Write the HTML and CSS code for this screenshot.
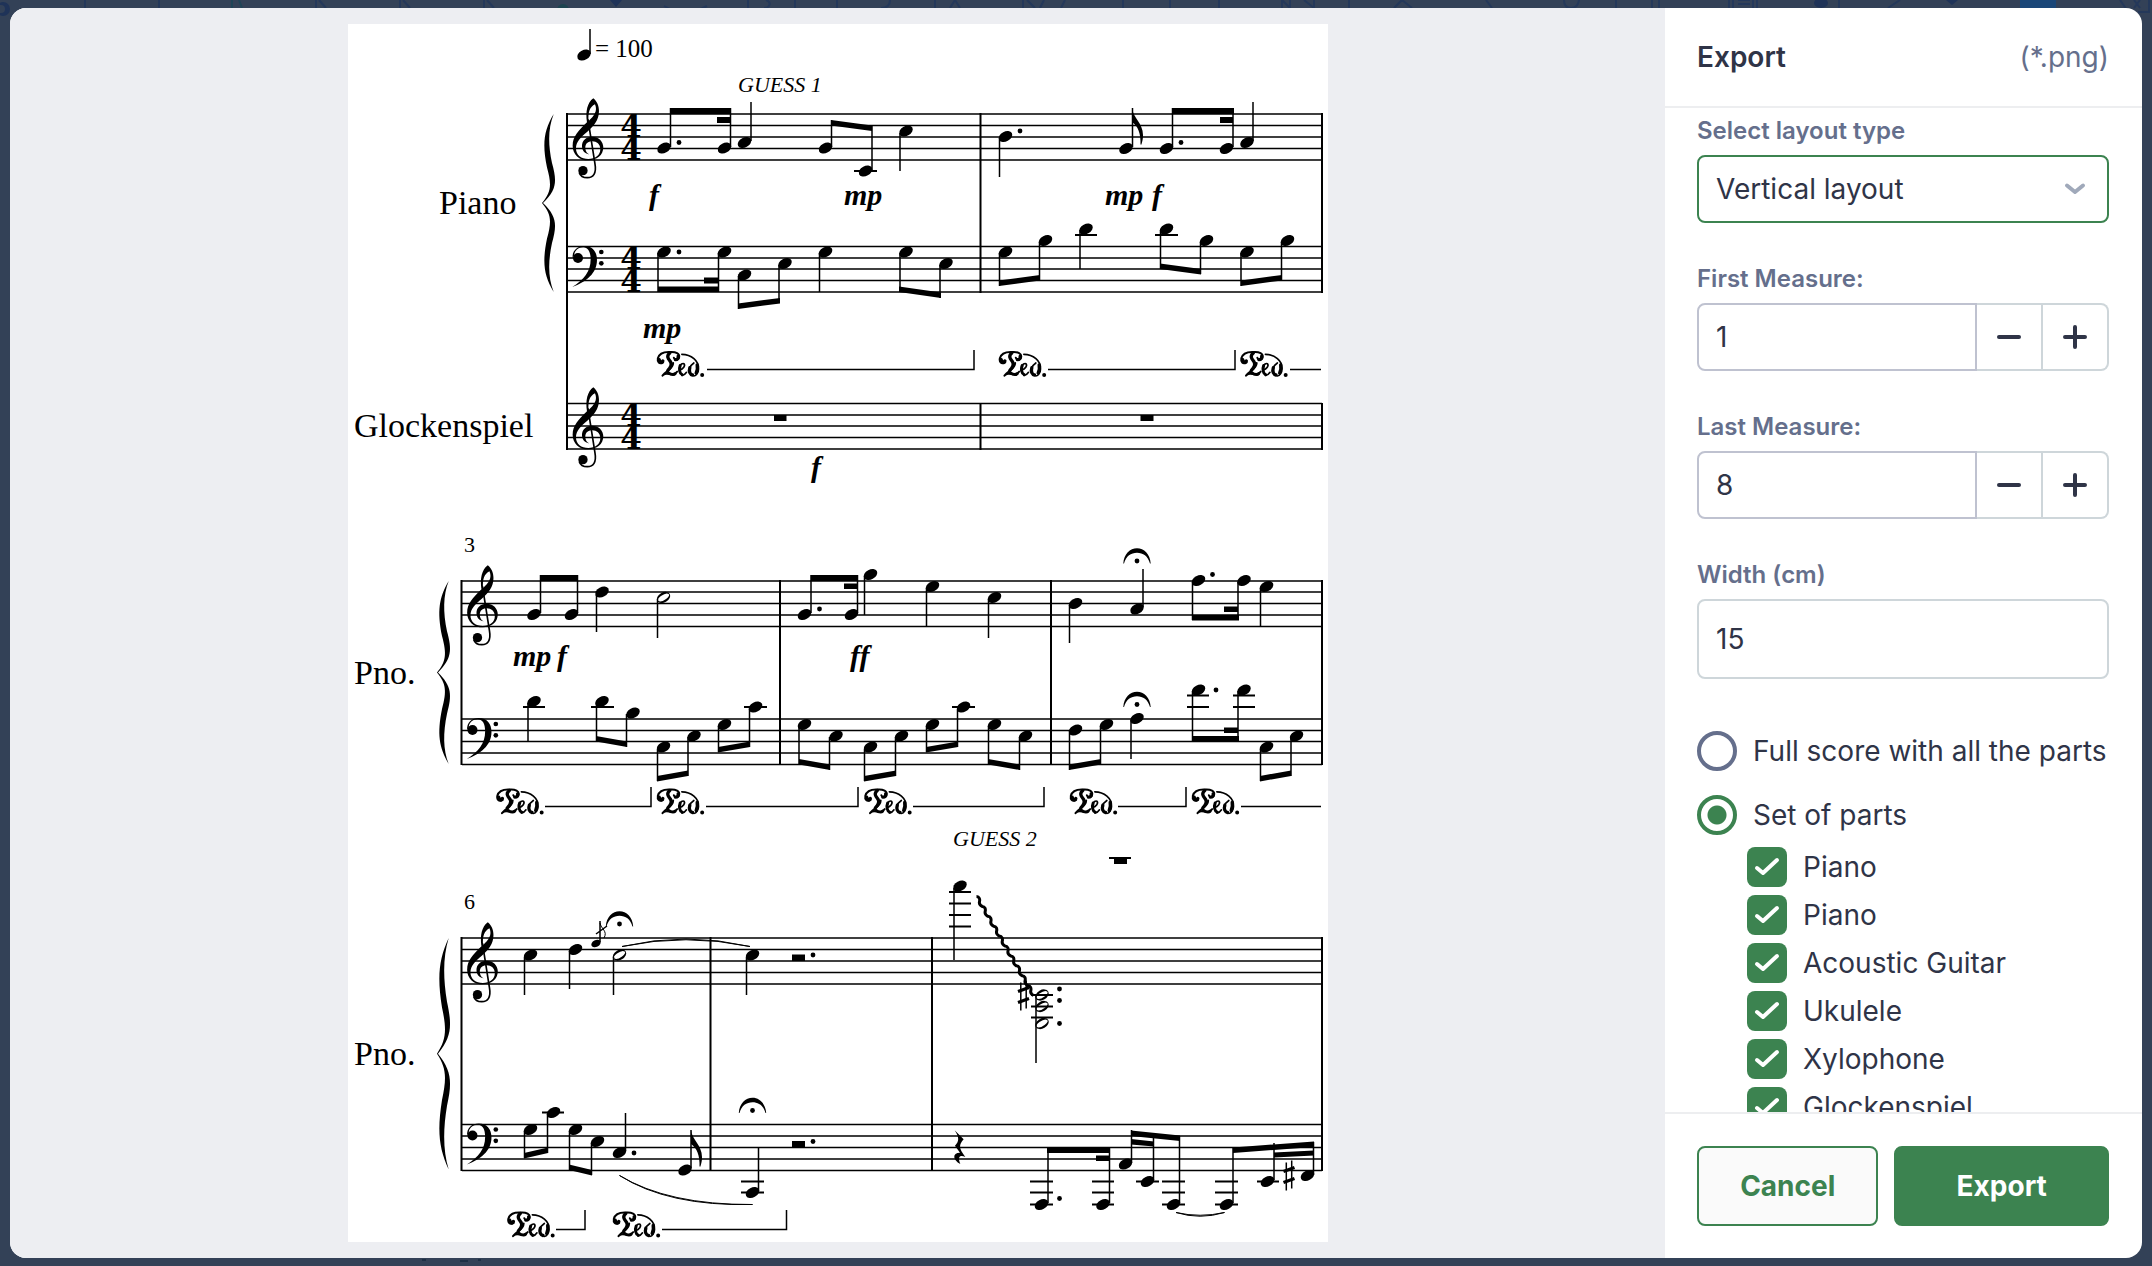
FILE: index.html
```html
<!DOCTYPE html>
<html lang="en">
<head>
<meta charset="utf-8">
<title>Export</title>
<link rel="stylesheet" href="styles.css">
</head>
<body>
<svg class="backdrop" aria-hidden="true" preserveAspectRatio="xMidYMin slice" viewBox="0 0 2152 1266">
  <g fill="none" stroke="#24385a" stroke-width="2">
    <path d="M85 0V8M159 0V8M316 0V8M400 0V8M484 0V8M319 0l7 8M403 0l7 8M487 0l7 8"/>
    <path d="M1652 0V8M1729 0V8M1733 0V8M1738 0h12M1738 4h12M1753 0V8M1757 0V8M1839 0V8M1888 8l12-8M2120 0l7 10M2134 0l6 8M2140 0l-6 8M2149 0V12H2138"/>
    <path d="M748 0V8M795 0V8M837 0V8M935 0V8M1123 0V8M1170 0V8M1219 0V8M1349 0V8M1616 0V8M1659 0V8M766 0c6 2 4 8-2 8M890 0c0 5-3 8-9 8M950 8l5-8l5 8M1023 0V8M1027 0l8 8M1040 8l4-8M1061 8l4-8M1282 0V8l0-8l8 8V0M1304 0l10 8V0M1394 8l8-8l10 8M1486 0l6 8M1564 0q0 8 7 8t8-8M664 6q21 12 43 0"/>
    <path stroke="#1f4457" d="M232 0V8M239 0l3 8"/>
    <path stroke="#1d2f45" d="M422 1260h4M460 1261h8M478 1260h3"/>
  </g>
  <circle cx="3" cy="9" r="7" fill="#1f3358"/><circle cx="1" cy="9" r="4" fill="#334157"/>
  <circle cx="563" cy="10" r="6" fill="#1d4450"/>
  <path d="M610 0h12l-6 7z" fill="#1f3358"/>
  <ellipse cx="1821" cy="3" rx="7" ry="5" fill="#1f3358"/><path d="M1946 0h12l-6 5z" fill="#1f3358"/>
  <path fill="#1a4678" d="M2020 0h36v8h-36z"/>
</svg>
<main class="modal">
  <section class="preview" aria-label="Score preview">
    <svg class="score" viewBox="348 24 980 1218" role="img" aria-label="Score">
      <defs>
        <marker id="head" markerUnits="userSpaceOnUse" markerWidth="20" markerHeight="20" refX="0" refY="0" viewBox="-10 -10 20 20"><ellipse rx="7.2" ry="4.9" transform="rotate(-28)"/></marker>
        <marker id="half" markerUnits="userSpaceOnUse" markerWidth="20" markerHeight="20" refX="0" refY="0" viewBox="-10 -10 20 20"><path fill-rule="evenodd" transform="rotate(-30)" d="M-7.2 0A7.2 5 0 1 1 7.2 0A7.2 5 0 1 1-7.2 0ZM-6.2 .6A6.2 2.6 0 1 0 6.2-.6A6.2 2.6 0 1 0-6.2 .6Z"/></marker>
        <marker id="dot" markerUnits="userSpaceOnUse" markerWidth="8" markerHeight="8" refX="0" refY="0" viewBox="-4 -4 8 8"><circle r="2.4"/></marker>
        <g id="treble"><g transform="translate(340 10) scale(.3333)">
          <path fill-rule="evenodd" d="M760 265C772 274 777 290 777 303C777 330 762 348 742 365C722 382 708 395 708 415C708 436 724 447 745 447C766 447 781 436 781 418C781 402 770 394 757 394C744 394 736 401 736 413C736 423 741 430 748 433C733 431 726 421 726 408C726 392 738 380 756 380C776 380 790 394 790 412C790 436 770 451 745 451C718 451 698 434 698 407C698 380 715 362 741 337C736 305 742 278 760 265ZM765 283C750 290 743 308 746 333C762 318 774 303 765 283Z"/>
          <path fill="none" stroke="#000" stroke-width="5" d="M744 328L765 462C770 490 760 503 742 503C730 503 721 498 718 488"/>
          <circle cx="729" cy="482" r="14"/></g></g>
        <g id="bass"><g transform="translate(340 10) scale(.3333)">
          <path d="M698 744C696 722 712 708 733 708C758 708 771 725 771 750C771 790 738 816 697 831C732 810 752 785 752 748C752 726 745 713 730 712C715 712 703 722 703 736Z"/>
          <circle cx="714" cy="744" r="15"/><circle cx="784" cy="726" r="7"/><circle cx="784" cy="760" r="7"/></g></g>
        <path id="brace" d="M11.7 0C2 18 0 33 5 60C10 80 9 88 0 100C9 112 10 120 5 140C0 167 2 182 11.7 200C6 184 6 166 10 145C15 125 15 115 1 100C15 85 15 75 10 55C6 34 6 16 11.7 0Z"/>
        <g id="fermata"><path d="M-13.7 2.5C-13-7-7-12.7 0-12.7S13-7 13.7 2.5H13C11-5 6-8.3 0-8.3S-11-5-13 2.5Z"/><circle r="2.4"/></g>
        <path id="flag" d="M0 0C1 10 11 15 11 27C11 32 10 34 9.500 36.500H8.500C9 26 6 18 0 14Z"/>
        <g id="sharp" fill="none" stroke="#000"><path stroke-width="1.500" d="M-2.700-13V15M2.700-15V13"/><path stroke-width="3.200" d="M-5.500-4L5.500-8M-5.500 7L5.500 3"/></g>
        <g id="ped" fill="none" stroke="#000"><g transform="translate(0 1) scale(.3333)" stroke-linecap="round">
          <path stroke-width="6" d="M20 34C8 42 2 32 4 22C8 6 26 2 42 3C58 2 70 8 68 18C66 28 54 28 52 20"/>
          <path stroke-width="10" d="M19 30C16 36 10 34 8 26M57 26C63 26 66 22 65 16"/>
          <path stroke-width="10" d="M40 6C28 16 36 24 42 32C48 42 40 52 34 58"/>
          <path stroke-width="6" d="M50 36C50 54 30 58 18 74M20 72C30 62 42 74 54 70L62 62"/>
          <path stroke-width="9" d="M34 64C42 70 50 74 56 68M71 44C67 54 69 68 77 71"/>
          <path stroke-width="5" d="M69 58C80 54 88 44 82 38C78 36 72 40 70 46M76 73C82 74 86 70 90 64"/>
          <path stroke-width="5" d="M76 10C104 10 128 30 126 54C126 64 120 74 112 75M112 36C106 40 100 46 98 54"/>
          <path stroke-width="10" d="M100 50C96 62 101 71 108 72M122 42C124 52 122 60 119 66"/>
          <circle cx="137" cy="72" r="3" stroke-width="6"/></g></g>
      </defs>
      <rect class="paper" x="348" y="24" width="980" height="1218"/>

      <path class="line" d="M567 114H1322M567 125.500H1322M567 137H1322M567 148.500H1322M567 160H1322M567 246.500H1322M567 258H1322M567 269H1322M567 280.500H1322M567 292H1322M567 403.500H1322M567 415H1322M567 426H1322M567 437.500H1322M567 449H1322
        M462 581H1322M462 592H1322M462 603.500H1322M462 615H1322M462 626.500H1322M462 719H1322M462 730.500H1322M462 741.500H1322M462 753H1322M462 764.500H1322
        M462 938H1322M462 949.500H1322M462 961H1322M462 972.500H1322M462 984H1322M462 1124.500H1322M462 1136H1322M462 1147.500H1322M462 1159H1322M462 1170.500H1322"/>
      <path class="bar" d="M567 113V450M980.500 113V293M980.500 403V450M1322 113V293M1322 403V450M461.500 580V765M780 580V765M1051 580V765M1322 580V765M461.500 937V1171M710.500 937V1171M932 937V1171M1322 937V1171"/>
      <use href="#brace" transform="translate(542 114) scale(1 .89)"/>
      <use href="#brace" transform="translate(437 581) scale(1 .915)"/>
      <use href="#brace" transform="translate(437 938) scale(1 1.157)"/>
      <use href="#treble"/><use href="#treble" y="289"/><use href="#treble" x="-105.500" y="467"/><use href="#treble" x="-105.500" y="824"/>
      <use href="#bass"/><use href="#bass" x="-105.500" y="472"/><use href="#bass" x="-105.500" y="877.500"/>

      <g class="meter"><text x="631" y="137">4</text><text x="631" y="160">4</text><text x="631" y="269">4</text><text x="631" y="292">4</text><text x="631" y="426">4</text><text x="631" y="449">4</text></g>
      <g class="part"><text x="439" y="214">Piano</text><text x="354" y="437">Glockenspiel</text><text x="354" y="684">Pno.</text><text x="354" y="1065">Pno.</text></g>
      <g class="number"><text x="464" y="552">3</text><text x="464" y="909">6</text></g>
      <text class="tempo" x="595" y="57">= 100</text>
      <g class="lyric"><text x="738" y="92">GUESS 1</text><text x="953" y="846">GUESS 2</text></g>
      <g class="dynamic"><text x="649" y="205">f</text><text x="844" y="205">mp</text><text x="1105" y="205">mp</text><text x="1152" y="205">f</text><text x="643" y="338">mp</text><text x="811" y="477">f</text><text x="513" y="666">mp</text><text x="557" y="666">f</text><text x="850" y="666">ff</text></g>

      <polyline class="heads" points="584,55 664,148 724.500,148 744.500,142.500 825.500,148 865.500,171 906,131 1005.500,136.500 1126,148.500 1166.500,148.500 1226.500,148.500 1247,142.500
        664,252 724.500,252 744.500,275 785,263.500 825.500,252 906,252 946,263.500 1005.500,252 1045.500,240.500 1086,229 1166.500,229 1206.500,240.500 1247,252 1287.500,240.500"/>
      <polyline class="heads" points="534,614.500 571.500,614.500 602,592 804.500,614.500 851.500,614.500 870.500,574.500 932.500,586.500 994.500,597.500 1075.500,603.500 1137,609 1198.500,580.500 1244,580.500 1266.500,586.500
        534,701.500 602,701.500 633,713 663.500,747 694,736 724.500,724.500 755.500,707 804.500,724.500 836,736 870.500,747 901.500,736 932.500,724.500 963.500,707 994.500,724.500 1025.500,736 1075.500,730 1106.500,724.500 1137,718.500 1198.500,690 1244,690 1266.500,747 1296.500,736"/>
      <polyline class="heads" points="530.500,955 575.500,949.500 752.500,955 960,886 530.500,1129.500 553.500,1112.500 575.500,1129.500 597.500,1141.500 619.500,1152.500 685,1170 752.500,1192.500 1041.500,1204.500 1103,1204.500 1125.500,1164 1147.500,1181.500 1173.500,1204.500 1226.500,1204.500 1267.500,1181.500 1307.500,1175.500"/>
      <polyline class="halves" points="663.500,597.500 619.500,955 1042,995 1042,1006.500 1042,1023.500"/>
      <polyline class="dots" points="679,142.500 679,252 1020,131 1181,142.500 819.500,609 1212.500,574.500 1216,690 813,955 1059.500,989 1059.500,1000.500 1059.500,1023.500 634,1153 813,1141.500 1059.500,1198.500"/>
      <ellipse cx="596" cy="943.500" rx="5" ry="3.400" transform="rotate(-28 596 943.500)"/>

      <path class="stem" d="M590 29V54M670.500 108V147M730.500 108V147M751 102V141M831.500 120V147M872 126V170M900 133V171M999.500 138V177M1132.500 108V147M1172.500 108V147M1233 108V147M1253 102V141
        M658 253V292M718.500 253V292M738.500 276V309M779 265V303M819.500 253V292M900 253V292M940 265V298M999.500 253V286M1039.500 242V280M1080 230V269M1160.500 230V269M1200.500 242V274M1241 253V286M1281.500 242V280
        M540.500 575V613M577.500 575V613M596.500 594V632M657.500 599V638M811 575V613M857.500 575V613M864.500 576V615M926.500 588V627M988.500 599V638M1069.500 605V643M1143 569V607M1192.500 582V620M1238 582V620M1260.500 588V627
        M528 703V741M596.500 703V741M626.500 714V747M657.500 749V781M688 737V776M718.500 726V752M749.500 709V747M799 726V764M829.500 737V770M864.500 749V781M895.500 737V776M926.500 726V752M957.500 709V747M988.500 726V764M1019.500 737V770M1069.500 731V770M1100.500 726V764M1131 720V759M1192.500 691V741M1238 691V741M1260.500 749V781M1291 737V776
        M524.500 957V995M569.500 951V989M613.500 957V995M746.500 957V995M600 921V942M596 934L607 926M954 888V960M1036 995V1063
        M524.500 1131V1158M547.500 1114V1153M569.500 1131V1170M591.500 1143V1175M625.500 1113V1151M691 1130V1168M758.500 1147V1191M1048 1147V1203M1109.500 1147V1203M1131.500 1130V1163M1153.500 1134V1180M1179.500 1136V1203M1233 1148V1203M1274 1143V1180M1313.500 1142V1175"/>
      <path class="ledger" d="M854 171H877M1075 235H1097M1155 235H1178M523 707H545M591 707H614M744 707H767M952 707H975M1187 707H1209M1187 695.500H1209M1233 707H1255M1233 695.500H1255
        M949 892H971M949 903.500H971M949 915H971M949 926.500H971M1031 995H1053M1031 1006.500H1053M1031 1017.500H1053M542 1112.500H564M741 1181.500H764M741 1192.500H764
        M1030 1181.500H1053M1030 1192.500H1053M1030 1204.500H1053M1092 1181.500H1114M1092 1192.500H1114M1092 1204.500H1114M1162 1181.500H1185M1162 1192.500H1185M1162 1204.500H1185M1215 1181.500H1238M1215 1192.500H1238M1215 1204.500H1238M1136 1181.500H1159M1257 1181.500H1279M1109 858H1131"/>
      <path class="beam" d="M670 108H731V114H670ZM717 117H731V123H717ZM831 120L872 125.500V131L831 125.500ZM1172 108H1234V114H1172ZM1220 117H1233V123H1220ZM658 286.500H719V292H658ZM704 277.500H719V283.500H704ZM738 303.500L780 298V303.500L738 309ZM899 286.500L941 292.500V298L899 292ZM999 280.500L1040 275V280.500L999 286ZM1160 263.500L1201 269V274.500L1160 269ZM1241 280.500L1282 275V280.500L1241 286Z
        M540 575H578V581H540ZM811 575H858V581H811ZM844 583.500H858V589H844ZM1192 615H1239V620.500H1192ZM1224 606.500H1238V612H1224Z
        M596 736L627 741.500V747L596 741.500ZM657 776L688 770.500V776L657 781.500ZM718 747L750 741.500V747L718 752.500ZM799 759L830 764.500V770L799 764.500ZM864 776L896 770.500V776L864 781.500ZM926 747L958 741.500V747L926 752.500ZM988 759L1020 764.500V770L988 764.500ZM1069 764.500L1101 759V764.500L1069 770ZM1192 736H1239V741.500H1192ZM1224 727.500H1238V733H1224ZM1260 776L1291 770.500V776L1260 781.500Z
        M524 1153L548 1147.500V1153L524 1158.500ZM569 1164.500L592 1170V1175.500L569 1170ZM1047 1147.500H1110V1153H1047ZM1096 1155.500H1110V1161H1096ZM1131 1130.500L1180 1135.500V1141L1131 1136ZM1131 1139L1154 1141.500V1146.500L1131 1144.500ZM1233 1147.500L1314 1141.500V1147L1233 1153ZM1274 1152.500L1314 1150.500V1155.500L1274 1157.500Z
        M774 415H786.500V421H774ZM1140.500 415H1153.500V421H1140.500ZM792 954.500H805V961H792ZM792 1141H805V1147H792ZM1114 858H1127V864H1114Z"/>
      <use href="#flag" x="1132" y="108"/><use href="#flag" x="691" y="1130"/>
      <path class="thin" d="M600 923C601 929 608 931 604 938M622 946.500Q686 931.500 750 946.500Q686 933 622 946.500M619.500 1175.500Q668 1206.500 752.500 1204.500Q668 1205 619.500 1175.500M1176 1212.500Q1200 1220 1224.500 1212.500Q1200 1218 1176 1212.500"/>
      <path class="glissando" d="M976.500 896.500c3 0 3.500 3 3 5s1 4 2.700 4.900c3 0 3.500 3 3 5s1 4 2.700 4.900c3 0 3.500 3 3 5s1 4 2.700 4.900c3 0 3.500 3 3 5s1 4 2.700 4.900c3 0 3.500 3 3 5s1 4 2.700 4.900c3 0 3.500 3 3 5s1 4 2.700 4.900c3 0 3.500 3 3 5s1 4 2.700 4.900c3 0 3.500 3 3 5s1 4 2.700 4.900c3 0 3.500 3 3 5s1 4 2.700 4.900c3 0 3.500 3 3 5s1 4 2.700 4.900"/>
      <use href="#sharp" x="1023.500" y="995.500"/><use href="#sharp" x="1289" y="1175.500"/>
      <path transform="translate(830 860) scale(.3333)" d="M374 811L401 838C386 856 386 864 406 891C390 884 382 890 391 912C368 900 366 878 390 878L375 857C388 845 388 832 374 811Z"/>
      <use href="#fermata" x="1137" y="561"/><use href="#fermata" x="1137" y="704.500"/><use href="#fermata" x="619.500" y="924"/><use href="#fermata" x="752.500" y="1110.500"/>
      <use href="#ped" x="656.500" y="350"/><use href="#ped" x="998.500" y="350"/><use href="#ped" x="1240" y="350"/>
      <use href="#ped" x="496" y="787.500"/><use href="#ped" x="656.500" y="787.500"/><use href="#ped" x="864" y="787.500"/><use href="#ped" x="1069.500" y="787.500"/><use href="#ped" x="1191.500" y="787.500"/>
      <use href="#ped" x="507" y="1210.500"/><use href="#ped" x="612.500" y="1210.500"/>
      <path class="line" d="M707 369.500H974V350M1048 369.500H1235V350M1290 369.500H1321M545 806.500H651V787M706 806.500H858V787M913 806.500H1044V787M1118 806.500H1186V787M1241 806.500H1321M556 1229.500H585V1210M662 1229.500H786.500V1210"/>
    </svg>
  </section>

  <form class="panel">
    <header class="panel-header"><h1>Export</h1><span class="format">(*.png)</span></header>
    <div class="panel-body">
      <div class="field">
        <label for="layout">Select layout type</label>
        <div class="select">
          <select id="layout" class="control"><option>Vertical layout</option></select>
          <svg class="chevron" viewBox="0 0 24 16" aria-hidden="true"><path d="M4 4.500L12 11L20 4.500"/></svg>
        </div>
      </div>
      <div class="field">
        <label for="first">First Measure:</label>
        <div class="stepper">
          <input id="first" class="control" type="text" value="1">
          <button type="button" aria-label="Decrease first measure"><svg viewBox="0 0 28 28"><path d="M4 14H24"/></svg></button>
          <button type="button" aria-label="Increase first measure"><svg viewBox="0 0 28 28"><path d="M4 14H24M14 4V24"/></svg></button>
        </div>
      </div>
      <div class="field">
        <label for="last">Last Measure:</label>
        <div class="stepper">
          <input id="last" class="control" type="text" value="8">
          <button type="button" aria-label="Decrease last measure"><svg viewBox="0 0 28 28"><path d="M4 14H24"/></svg></button>
          <button type="button" aria-label="Increase last measure"><svg viewBox="0 0 28 28"><path d="M4 14H24M14 4V24"/></svg></button>
        </div>
      </div>
      <div class="field">
        <label for="width">Width (cm)</label>
        <input id="width" class="control tall" type="text" value="15">
      </div>
      <label class="choice radio"><input type="radio" name="parts">Full score with all the parts</label>
      <label class="choice radio"><input type="radio" name="parts" checked>Set of parts</label>
      <div class="parts">
        <label class="choice"><span class="tick"><input type="checkbox" checked><svg viewBox="0 0 40 40"><path d="M10 21L16 26L30 13"/></svg></span>Piano</label>
        <label class="choice"><span class="tick"><input type="checkbox" checked><svg viewBox="0 0 40 40"><path d="M10 21L16 26L30 13"/></svg></span>Piano</label>
        <label class="choice"><span class="tick"><input type="checkbox" checked><svg viewBox="0 0 40 40"><path d="M10 21L16 26L30 13"/></svg></span>Acoustic Guitar</label>
        <label class="choice"><span class="tick"><input type="checkbox" checked><svg viewBox="0 0 40 40"><path d="M10 21L16 26L30 13"/></svg></span>Ukulele</label>
        <label class="choice"><span class="tick"><input type="checkbox" checked><svg viewBox="0 0 40 40"><path d="M10 21L16 26L30 13"/></svg></span>Xylophone</label>
        <label class="choice"><span class="tick"><input type="checkbox" checked><svg viewBox="0 0 40 40"><path d="M10 21L16 26L30 13"/></svg></span>Glockenspiel</label>
      </div>
    </div>
    <footer class="panel-footer">
      <button type="button" class="button cancel">Cancel</button>
      <button type="submit" class="button export">Export</button>
    </footer>
  </form>
</main>
</body>
</html>
```
FILE: styles.css
```css
* { box-sizing: border-box; }

body {
  margin: 0;
  height: 100vh;
  padding: 8px 10px;
  background: #334157;
  color: #2f3447;
  font: 28px/40px Inter, "Liberation Sans", sans-serif;
}

.backdrop {
  position: absolute;
  inset: 0;
  width: 100%;
  height: 100%;
}

.modal {
  position: relative;
  display: flex;
  height: 100%;
  border-radius: 16px;
  overflow: hidden;
  background: #fff;
}

.preview {
  flex: 1;
  min-width: 0;
  display: flex;
  justify-content: center;
  padding: 16px 16px 16px 17px;
  background: #edeef2;
}

.score {
  height: 100%;
  max-width: 100%;
  font-family: "Liberation Serif", serif;
}

.paper { fill: #fff; }
.line, .bar, .stem, .ledger, .thin, .glissando { fill: none; stroke: #000; }
.bar, .ledger { stroke-width: 2; }
.line { stroke-width: 1.5; }
.stem { stroke-width: 1.5; }
.thin { stroke-width: 1; }
.glissando { stroke-width: 3; }
.heads, .halves, .dots { fill: none; }
.heads { marker: url(#head); }
.halves { marker: url(#half); }
.dots { marker: url(#dot); }
.meter { font-family: "DejaVu Serif", serif; font-size: 31px; font-weight: 700; text-anchor: middle; }
.part { font-size: 34px; }
.number { font-size: 22px; }
.tempo { font-size: 25px; }
.lyric { font-size: 22px; font-style: italic; }
.dynamic { font-size: 30px; font-weight: 700; font-style: italic; }

.panel {
  flex: 0 0 477px;
  display: flex;
  flex-direction: column;
  min-height: 0;
}

.panel-header {
  display: flex;
  justify-content: space-between;
  align-items: center;
  padding: 29px 33px 29px 32px;
  border-bottom: 2px solid #edeef0;
}

.panel-header h1 {
  margin: 0;
  font-size: 28px;
  font-weight: 600;
}

.format { color: #656f8c; }

.panel-body {
  flex: 1;
  min-height: 0;
  overflow-y: auto;
  scrollbar-width: none;
  padding: 7px 33px 0 32px;
}

.field { margin-bottom: 40px; }

.field > label {
  display: block;
  margin-bottom: 8px;
  color: #656f8c;
  font-size: 24px;
  font-weight: 600;
  line-height: 32px;
}

.control {
  display: block;
  width: 100%;
  min-width: 0;
  height: 68px;
  margin: 0;
  padding: 0 17px;
  border: 2px solid #bfc2d0;
  border-radius: 8px;
  background: #fff;
  color: inherit;
  font: inherit;
}

.control.tall {
  height: 80px;
  border-color: #ced6da;
}

.select { position: relative; }

.select .control {
  appearance: none;
  border-color: #3c8350;
}

.chevron {
  position: absolute;
  top: 26px;
  right: 22px;
  width: 24px;
  height: 16px;
  pointer-events: none;
}

.chevron path, .stepper path, .tick path {
  fill: none;
  stroke: #a0a9ba;
  stroke-width: 4;
  stroke-linecap: round;
  stroke-linejoin: round;
}

.stepper { display: flex; }

.stepper .control {
  flex: 1;
  border-radius: 8px 0 0 8px;
}

.stepper button {
  flex: 0 0 66px;
  display: flex;
  align-items: center;
  justify-content: center;
  padding: 0;
  border: 2px solid #ced6da;
  border-left: 0;
  background: #fff;
}

.stepper button:last-child { border-radius: 0 8px 8px 0; }

.stepper svg {
  width: 28px;
  height: 28px;
}

.stepper path { stroke: #2f3447; }

.choice {
  display: flex;
  align-items: center;
  gap: 16px;
  height: 40px;
  margin-bottom: 8px;
  white-space: nowrap;
}

.choice.radio { margin-bottom: 24px; }
.field + .choice { margin-top: 52px; }

.choice input {
  appearance: none;
  flex: none;
  width: 40px;
  height: 40px;
  margin: 0;
}

.choice input[type="radio"] {
  border: 4px solid #656f8c;
  border-radius: 50%;
}

.choice input[type="radio"]:checked {
  border-color: #3c8350;
  background: radial-gradient(circle, #3c8350 9px, #fff 10px);
}

.parts {
  margin-top: -12px;
  padding-left: 50px;
}

.tick {
  display: grid;
  flex: none;
  width: 40px;
  height: 40px;
}

.tick > * { grid-area: 1 / 1; }

.tick input {
  border-radius: 8px;
  background: #3c8350;
}

.tick svg { pointer-events: none; }
.tick path { stroke: #fff; }

.panel-footer {
  display: flex;
  gap: 16px;
  padding: 32px 33px 32px 32px;
  border-top: 2px solid #edeef0;
}

.button {
  height: 80px;
  border: 2px solid #3c8350;
  border-radius: 8px;
  font: inherit;
  font-weight: 700;
}

.cancel {
  flex: 180;
  background: #fafafa;
  color: #3c8350;
}

.export {
  flex: 216;
  background: #3c8350;
  color: #fff;
}
```
